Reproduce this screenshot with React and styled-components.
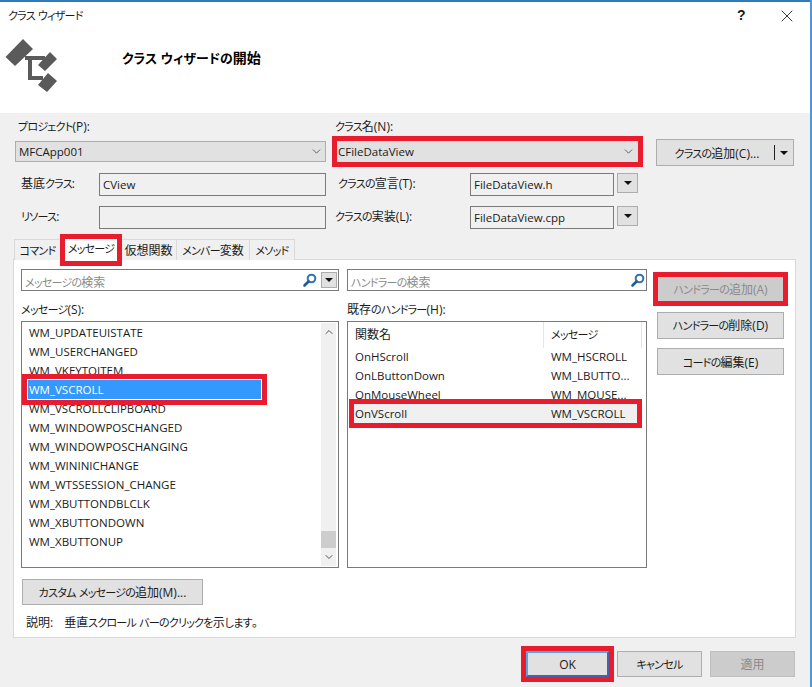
import React from 'react';
import styled, { createGlobalStyle } from 'styled-components';
import { ChevronDown, ChevronUp, X } from 'lucide-react';

const GlobalStyle = createGlobalStyle`
  html, body {
    margin: 0;
    padding: 0;
    background: #fff;
  }
  body {
    font-family: "Open Sans", "Noto Sans CJK JP", sans-serif;
    font-size: 12px;
    font-feature-settings: "palt";
    color: #1a1a1a;
  }
`;

const RED = '#e81c2c';

const Page = styled.div`
  display: flex;
  width: 812px;
  height: 687px;
  overflow: hidden;
`;

const Window = styled.div`
  width: 810px;
  height: 687px;
  display: flex;
  flex-direction: column;
  border-top: 2px solid #2f7ab8;
  box-sizing: border-box;
`;

const EdgeLine = styled.div`
  width: 2px;
  background: #4f97d8;
`;

const TitleBar = styled.div`
  height: 28px;
  display: flex;
  align-items: center;
  padding: 0 13px 0 8px;
  line-height: 1;
`;

const TitleText = styled.div`
  flex: 1;
`;

const HelpMark = styled.div`
  width: 40px;
  margin-top: -2px;
  font-size: 14px;
  font-family: "Liberation Sans", sans-serif;
  font-weight: bold;
`;

const Header = styled.div`
  height: 83px;
  display: flex;
  background: #fff;
`;

const Logo = styled.svg`
  display: block;
  margin-top: 3px;
  width: 60px;
  height: 60px;
`;

const HeaderTitle = styled.h1`
  margin: 20px 0 0 62px;
  font-size: 14px;
  line-height: 16px;
  font-weight: bold;
  color: #000;

  span {
    letter-spacing: 0;
  }
`;

const Body = styled.div`
  flex: 1;
  background: #f0f0f0;
`;

const FormGrid = styled.div`
  display: grid;
  grid-template-columns: 84px 227px 11px 133px 144px 3px 21px 18px 138px;
  grid-template-rows: 21px 32px 33px 33px;
  padding: 7px 0 0 15px;
  height: 126px;
  box-sizing: border-box;
  align-items: start;
`;

const Label = styled.label`
  line-height: 14px;
  grid-column: ${(p) => p.$col};
  margin-left: ${(p) => p.$indent || 0}px;
  white-space: nowrap;
`;

const FieldLabel = styled(Label)`
  margin-top: 4px;
`;

const Combo = styled.div`
  grid-column: ${(p) => p.$col};
  height: 21px;
  display: flex;
  align-items: center;
  justify-content: space-between;
  padding: 0 2px 0 ${(p) => (p.$marked ? 0 : 3)}px;
  box-sizing: border-box;
  font-size: 11.5px;
  background: #e1e1e1;
  border: 1px solid #adadad;
  ${(p) => p.$marked && `outline: 5px solid ${RED}; border-color: #dcdcdc;`}
`;

const TextField = styled.div`
  grid-column: ${(p) => p.$col};
  height: 23px;
  line-height: 21px;
  padding-left: 3px;
  box-sizing: border-box;
  font-size: 11.5px;
  background: #f0f0f0;
  border: 1px solid #7a7a7a;
`;

const ArrowButton = styled.div`
  grid-column: ${(p) => p.$col};
  width: ${(p) => p.$size || 21}px;
  height: ${(p) => p.$size || 20}px;
  display: flex;
  align-items: center;
  justify-content: center;
  box-sizing: border-box;
  background: #e1e1e1;
  border: 1px solid #adadad;
`;

const Triangle = styled.span`
  width: 0;
  height: 0;
  border-left: 4px solid transparent;
  border-right: 4px solid transparent;
  border-top: 4px solid #111;
`;

const SplitButton = styled.div`
  grid-column: ${(p) => p.$col};
  height: 27px;
  margin-top: -2px;
  display: flex;
  align-items: center;
  box-sizing: border-box;
  background: #e1e1e1;
  border: 1px solid #adadad;
`;

const SplitText = styled.span`
  width: 117px;
  padding-left: 3px;
  box-sizing: border-box;
  text-align: center;
`;

const SplitDivider = styled.span`
  width: 1px;
  height: 15px;
  margin-right: 5px;
  background: #222;
`;

const TabStrip = styled.div`
  display: flex;
  height: 21px;
  margin: 0 0 -1px 14px;
  position: relative;
`;

const Tab = styled.div`
  height: 21px;
  line-height: 21px;
  width: ${(p) => p.$w}px;
  text-align: center;
  box-sizing: border-box;
  border: 1px solid #d9d9d9;
  border-left: none;
  border-bottom: none;
  background: #f0f0f0;

  &:first-child {
    border-left: 1px solid #d9d9d9;
  }
`;

const ActiveTab = styled.div`
  width: ${(p) => p.$w}px;
  height: 30px;
  margin-top: -4px;
  line-height: 28px;
  text-align: center;
  background: #fff;
  outline: 5px solid ${RED};
  outline-offset: -4px;
  position: relative;
  z-index: 1;
`;

const Panel = styled.div`
  margin-left: 13px;
  width: 783px;
  height: 379px;
  box-sizing: border-box;
  background: #fff;
  border: 1px solid #d9d9d9;
  padding: 9px 0 0 7px;
  display: flex;
`;

const Column = styled.div`
  width: ${(p) => p.$w}px;
  margin-right: ${(p) => p.$gap}px;
`;

const SearchBox = styled.div`
  height: 22px;
  display: flex;
  align-items: center;
  box-sizing: border-box;
  border: 1px solid #7a7a7a;
  padding: 0 1px 0 3px;
  gap: 4px;
`;

const Placeholder = styled.span`
  flex: 1;
  padding-top: 3px;
  color: #8a8a8a;
`;

const ListLabel = styled.div`
  height: 30px;
  box-sizing: border-box;
  padding-top: 12px;
  line-height: 14px;
`;

const ListBox = styled.div`
  height: 247px;
  box-sizing: border-box;
  padding-top: ${(p) => p.$pad || 0}px;
  border: 1px solid #7a7a7a;
  position: relative;
`;

const MessageRow = styled.div`
  height: 19px;
  line-height: 19px;
  font-size: 11.5px;
  padding-left: 7px;
  white-space: nowrap;
  ${(p) => p.$selected && `
    margin-left: 6px;
    padding-left: 1px;
    width: 232px;
    background: #3399ff;
    color: #fff;
    outline: 5px solid ${RED};
    outline-offset: 1px;
    position: relative;
  `}
`;

const ScrollTrack = styled.div`
  position: absolute;
  top: 1px;
  right: 2px;
  bottom: 1px;
  width: 15px;
  background: #f0f0f0;
  display: flex;
  flex-direction: column;
  justify-content: space-between;
  align-items: center;
  padding: 3px 0;
  box-sizing: border-box;
`;

const ScrollThumb = styled.div`
  position: absolute;
  left: 0;
  right: 0;
  bottom: 18px;
  height: 17px;
  background: #cdcdcd;
`;

const ColumnHeader = styled.div`
  display: grid;
  grid-template-columns: 196px 98px;
  height: 25px;
`;

const HeaderCell = styled.div`
  padding-left: 7px;
  line-height: 26px;
  border-right: 1px solid #e5e5e5;
`;

const HandlerRow = styled.div`
  display: grid;
  grid-template-columns: 196px 1fr;
  height: 19px;
  line-height: 19px;
  font-size: 11.5px;
  margin-left: 6px;
  padding-left: 1px;
  white-space: nowrap;
  ${(p) => p.$selected && `
    width: 282px;
    background: #f0f0f0;
    outline: 5px solid ${RED};
    outline-offset: 0;
    position: relative;
  `}
`;

const Button = styled.button`
  display: block;
  font: inherit;
  font-feature-settings: inherit;
  color: ${(p) => (p.$off ? '#8a8a8a' : '#1a1a1a')};
  width: ${(p) => p.$w || 127}px;
  height: ${(p) => p.$h || 27}px;
  padding: 0;
  box-sizing: border-box;
  background: ${(p) => (p.$off ? '#cccccc' : '#e1e1e1')};
  border: 1px solid ${(p) => (p.$off ? '#bfbfbf' : '#adadad')};
  ${(p) => p.$marked && `
    outline: 5px solid ${RED};
    outline-offset: -1px;
  `}
`;

const OkButton = styled(Button)`
  border: 2px solid #5aa5e0;
  border-right-color: #4a5fa8;
  border-bottom-color: #4a5fa8;
  outline-offset: 0;
`;

const ButtonStack = styled.div`
  display: flex;
  flex-direction: column;
  gap: 9.5px;
  margin-top: 7px;
`;

const CustomRow = styled.div`
  margin: 11px 0 0 1px;
`;

const Description = styled.div`
  margin: 11px 0 0 5px;
  line-height: 14px;
`;

const DescriptionHead = styled.span`
  margin-right: 11px;
`;

const Footer = styled.div`
  display: flex;
  justify-content: flex-end;
  gap: 8px;
  padding: 13px 15px 0 0;
`;

// the dialog's UI font has much narrower kana than Noto, kanji stay full width
const Kana = styled.span`
  font-size: 0.92em;
  letter-spacing: -0.07em;
`;

const Jp = ({ children }) =>
  String(children)
    .split(/([\u3041-\u3096\u30A1-\u30FC]+)/)
    .map((part, i) => (i % 2 ? <Kana key={i}>{part}</Kana> : part));

const SearchIcon = () => (
  <svg width="15" height="15" viewBox="0 0 15 15">
    <circle cx="9.5" cy="5.5" r="3.8" fill="none" stroke="#2f74b0" strokeWidth="2" />
    <path d="M6.5 8.5 L2.5 12.5" stroke="#1f5c94" strokeWidth="2.6" strokeLinecap="round" />
  </svg>
);

const messages = [
  'WM_UPDATEUISTATE',
  'WM_USERCHANGED',
  'WM_VKEYTOITEM',
  'WM_VSCROLL',
  'WM_VSCROLLCLIPBOARD',
  'WM_WINDOWPOSCHANGED',
  'WM_WINDOWPOSCHANGING',
  'WM_WININICHANGE',
  'WM_WTSSESSION_CHANGE',
  'WM_XBUTTONDBLCLK',
  'WM_XBUTTONDOWN',
  'WM_XBUTTONUP',
];

const handlers = [
  ['OnHScroll', 'WM_HSCROLL'],
  ['OnLButtonDown', 'WM_LBUTTO...'],
  ['OnMouseWheel', 'WM_MOUSE...'],
  ['OnVScroll', 'WM_VSCROLL'],
];

const App = () => {
  return (
    <Page>
      <GlobalStyle />
      <Window>
        <TitleBar>
          <TitleText><Jp>クラス ウィザード</Jp></TitleText>
          <HelpMark>?</HelpMark>
          <X size={20} strokeWidth={1} color="#111" />
        </TitleBar>
        <Header>
          <Logo viewBox="0 30 60 60">
            <path
              fill="#5a5a5a"
              d="M5.5 54 L23 36 L33 46 L15 63 Z M38 62 L50 49 L57 56 L45 68 Z M38 82 L48 70 L57 78 L47 89 Z M25 53 H45 V57 H32 V73 H43 V77 H28 V57 H25 Z"
            />
          </Logo>
          <HeaderTitle><Jp>クラス ウィザードの開始</Jp></HeaderTitle>
        </Header>
        <Body>
          <FormGrid>
            <Label $col="1 / 3" $indent={3}><Jp>プロジェクト(P):</Jp></Label>
            <Label $col="4 / 6" $indent={-2}><Jp>クラス名(N):</Jp></Label>
            <span />
            <Combo $col="1 / 3">
              MFCApp001
              <ChevronDown size={13} strokeWidth={1.5} color="#444" />
            </Combo>
            <Combo $col="4 / 8" $marked>
              CFileDataView
              <ChevronDown size={13} strokeWidth={1.5} color="#444" />
            </Combo>
            <SplitButton $col="9">
              <SplitText><Jp>クラスの追加(C)...</Jp></SplitText>
              <SplitDivider />
              <Triangle />
            </SplitButton>
            <FieldLabel $col="1" $indent={6}><Jp>基底クラス:</Jp></FieldLabel>
            <TextField $col="2">CView</TextField>
            <FieldLabel $col="4" $indent={1}><Jp>クラスの宣言(T):</Jp></FieldLabel>
            <TextField $col="5">FileDataView.h</TextField>
            <ArrowButton $col="7"><Triangle /></ArrowButton>
            <FieldLabel $col="1" $indent={6}><Jp>リソース:</Jp></FieldLabel>
            <TextField $col="2" />
            <FieldLabel $col="4" $indent={-2}><Jp>クラスの実装(L):</Jp></FieldLabel>
            <TextField $col="5">FileDataView.cpp</TextField>
            <ArrowButton $col="7"><Triangle /></ArrowButton>
          </FormGrid>
          <TabStrip>
            <Tab $w={47}><Jp>コマンド</Jp></Tab>
            <ActiveTab $w={60}><Jp>メッセージ</Jp></ActiveTab>
            <Tab $w={56}><Jp>仮想関数</Jp></Tab>
            <Tab $w={73}><Jp>メンバー変数</Jp></Tab>
            <Tab $w={45}><Jp>メソッド</Jp></Tab>
          </TabStrip>
          <Panel>
            <Column $w={318} $gap={8}>
              <SearchBox>
                <Placeholder><Jp>メッセージの検索</Jp></Placeholder>
                <SearchIcon />
                <ArrowButton $size={16}><Triangle /></ArrowButton>
              </SearchBox>
              <ListLabel><Jp>メッセージ(S):</Jp></ListLabel>
              <ListBox $pad={1}>
                {messages.map((m) => (
                  <MessageRow key={m} $selected={m === 'WM_VSCROLL'}>{m}</MessageRow>
                ))}
                <ScrollTrack>
                  <ChevronUp size={12} strokeWidth={2} color="#555" />
                  <ScrollThumb />
                  <ChevronDown size={12} strokeWidth={2} color="#555" />
                </ScrollTrack>
              </ListBox>
              <CustomRow>
                <Button $w={181} $h={26}><Jp>カスタム メッセージの追加(M)...</Jp></Button>
              </CustomRow>
              <Description>
                <DescriptionHead>説明:</DescriptionHead>
                <Jp>垂直スクロール バーのクリックを示します。</Jp>
              </Description>
            </Column>
            <Column $w={300} $gap={10}>
              <SearchBox>
                <Placeholder><Jp>ハンドラーの検索</Jp></Placeholder>
                <SearchIcon />
              </SearchBox>
              <ListLabel><Jp>既存のハンドラー(H):</Jp></ListLabel>
              <ListBox>
                <ColumnHeader>
                  <HeaderCell>関数名</HeaderCell>
                  <HeaderCell><Jp>メッセージ</Jp></HeaderCell>
                </ColumnHeader>
                {handlers.map(([fn, msg]) => (
                  <HandlerRow key={fn} $selected={fn === 'OnVScroll'}>
                    <span>{fn}</span>
                    <span>{msg}</span>
                  </HandlerRow>
                ))}
              </ListBox>
            </Column>
            <ButtonStack>
              <Button $off $marked $h={26}><Jp>ハンドラーの追加(A)</Jp></Button>
              <Button><Jp>ハンドラーの削除(D)</Jp></Button>
              <Button><Jp>コードの編集(E)</Jp></Button>
            </ButtonStack>
          </Panel>
          <Footer>
            <OkButton $w={83} $h={26} $marked>OK</OkButton>
            <Button $w={85} $h={26}><Jp>キャンセル</Jp></Button>
            <Button $w={85} $h={26} $off>適用</Button>
          </Footer>
        </Body>
      </Window>
      <EdgeLine />
    </Page>
  );
};

export default App;
